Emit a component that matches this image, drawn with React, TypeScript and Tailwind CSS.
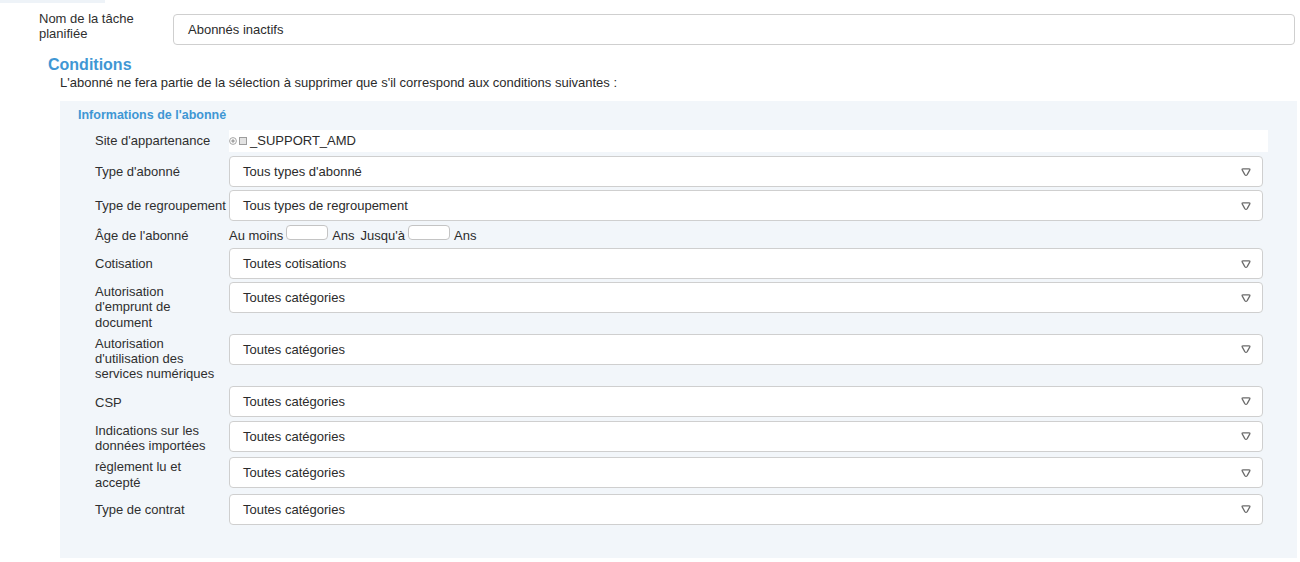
import React from "react";

const BLUE = "text-[#3f97d4]";

function Caret() {
  return (
    <svg width="10" height="10" viewBox="0 0 10 10" className="shrink-0">
      <path
        d="M2 1.8 H8 Q9.4 1.8 8.7 3.1 L6.2 7.6 Q5 9.3 3.8 7.6 L1.3 3.1 Q0.6 1.8 2 1.8 Z"
        fill="none"
        stroke="#6b6b6b"
        strokeWidth="1.25"
        strokeLinejoin="round"
      />
    </svg>
  );
}

function Select({ value }: { value: string }) {
  return (
    <div className="w-[1034px] h-[31px] mb-[3px] flex items-center justify-between bg-white border border-[#cfcfcf] rounded-[4px] pl-[13px] pr-[11px] text-[13px] text-[#2b2b2b]">
      <span>{value}</span>
      <Caret />
    </div>
  );
}

function Row({ label, children }: { label: React.ReactNode; children: React.ReactNode }) {
  return (
    <div className="flex">
      <div className="w-[134px] flex items-center pt-[2px] pb-[4px] text-[13px] leading-[15.3px] text-[#2f2f2f]">
        <div>{label}</div>
      </div>
      <div>{children}</div>
    </div>
  );
}

function SmallBox() {
  return <div className="w-[42px] h-[15px] mb-[8px] bg-white border border-[#c4c4c4] rounded-[4px]" />;
}

export default function App() {
  return (
    <div className="w-[1300px] h-[562px] bg-white overflow-hidden font-['Liberation_Sans',Arial,sans-serif] text-[#2f2f2f]">
      <div className="w-[105px] h-[3px] bg-[#eef3f8]" />

      {/* Task name */}
      <div className="flex items-start pl-[39px] pt-[8px]">
        <div className="w-[134px] text-[13px] leading-[15px]">
          Nom de la tâche
          <br />
          planifiée
        </div>
        <div className="mt-[3px] w-[1122px] h-[31px] flex items-center bg-white border border-[#cfcfcf] rounded-[4px] pl-[14px] text-[13px] text-[#2b2b2b]">
          Abonnés inactifs
        </div>
      </div>

      {/* Conditions */}
      <div className={`pl-[48px] mt-[10px] text-[16px] leading-[19px] font-bold ${BLUE}`}>Conditions</div>
      <div className="pl-[60px] mt-[1px] text-[13px] leading-[15.5px] text-[#2b2b2b]">
        L'abonné ne fera partie de la sélection à supprimer que s'il correspond aux conditions suivantes :
      </div>

      <div className="ml-[60px] mt-[10.5px] w-[1237px] h-[457px] bg-[#f2f6fa] pt-[7px]">
        <div className={`pl-[18px] text-[12.5px] leading-[15px] font-bold ${BLUE}`}>Informations de l'abonné</div>

        <div className="pl-[35px] mt-[7px]">
          {/* Site */}
          <div className="flex mb-[4px]">
            <div className="w-[134px] flex items-center text-[13px]">Site d'appartenance</div>
            <div className="w-[1039px] h-[22px] bg-white flex items-center text-[13px] text-[#2b2b2b]">
              <svg width="8" height="8" viewBox="0 0 8 8">
                <circle cx="4" cy="4" r="3.4" fill="#fff" stroke="#9a9a9a" strokeWidth="0.9" />
                <path d="M2.2 4 H5.8 M4 2.2 V5.8" stroke="#7a7a7a" strokeWidth="0.9" />
              </svg>
              <span className="ml-[2px] w-[8px] h-[8px] bg-[#e3e3e3] border border-[#9d9d9d]" />
              <span className="ml-[3px]">_SUPPORT_AMD</span>
            </div>
          </div>

          <Row label="Type d'abonné">
            <Select value="Tous types d'abonné" />
          </Row>
          <Row label="Type de regroupement">
            <Select value="Tous types de regroupement" />
          </Row>

          {/* Age */}
          <div className="flex h-[24px]">
            <div className="w-[134px] flex items-center text-[13px]">Âge de l'abonné</div>
            <div className="flex items-center text-[13px] text-[#2b2b2b]">
              <span>Au moins</span>
              <span className="ml-[3px]">
                <SmallBox />
              </span>
              <span className="ml-[4px]">Ans</span>
              <span className="ml-[6px]">Jusqu'à</span>
              <span className="ml-[3px]">
                <SmallBox />
              </span>
              <span className="ml-[4px]">Ans</span>
            </div>
          </div>

          <Row label="Cotisation">
            <Select value="Toutes cotisations" />
          </Row>
          <Row
            label={
              <>
                Autorisation
                <br />
                d'emprunt de
                <br />
                document
              </>
            }
          >
            <Select value="Toutes catégories" />
          </Row>
          <Row
            label={
              <>
                Autorisation
                <br />
                d'utilisation des
                <br />
                services numériques
              </>
            }
          >
            <Select value="Toutes catégories" />
          </Row>
          <Row label="CSP">
            <div className="pb-[1px]">
              <Select value="Toutes catégories" />
            </div>
          </Row>
          <Row
            label={
              <>
                Indications sur les
                <br />
                données importées
              </>
            }
          >
            <Select value="Toutes catégories" />
          </Row>
          <Row
            label={
              <>
                règlement lu et
                <br />
                accepté
              </>
            }
          >
            <Select value="Toutes catégories" />
          </Row>
          <Row label="Type de contrat">
            <Select value="Toutes catégories" />
          </Row>
        </div>
      </div>
    </div>
  );
}
